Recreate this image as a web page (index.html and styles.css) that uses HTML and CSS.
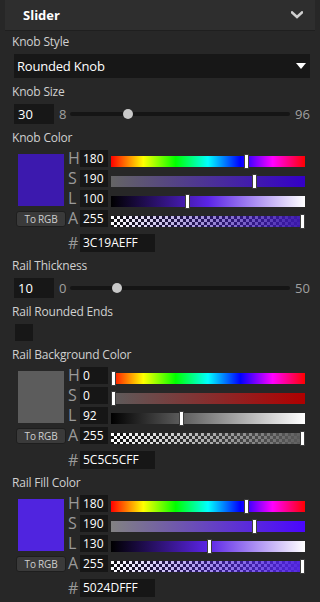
FILE: index.html
```html
<!DOCTYPE html>
<html lang="en">

<head>
    <meta charset="UTF-8">
    <meta name="viewport" content="width=device-width, initial-scale=1.0">
    <title>Slider Inspector</title>
    <link rel="stylesheet" href="styles.css">
</head>

<body>

    <div class="section-head">
        <span class="section-title">Slider</span>
        <svg class="chevron" width="12" height="8" viewBox="0 0 12 8">
            <path d="M1 1.5 L6 6 L11 1.5" fill="none" stroke="#cfcfcf" stroke-width="2.6" stroke-linecap="square"/>
        </svg>
    </div>

    <div class="props">

        <div class="field">
            <div class="label">Knob Style</div>
            <div class="dropdown">
                <span>Rounded Knob</span>
                <span class="caret"></span>
            </div>
        </div>

        <div class="field">
            <div class="label">Knob Size</div>
            <div class="slider">
                <div class="num">30</div>
                <span class="min">8</span>
                <div class="track"><span class="knob" style="left: 53px"></span></div>
                <span class="max">96</span>
            </div>
        </div>

        <!-- Knob color: H180 S190 L100 -> #3C19AE -->
        <div class="field">
            <div class="label">Knob Color</div>
            <div class="picker">
                <div class="picker-left">
                    <div class="swatch" style="background: #3c19ae"></div>
                    <button class="to-rgb">To RGB</button>
                </div>
                <div class="picker-rows">
                    <div class="row">
                        <span class="ch">H</span><div class="val">180</div>
                        <div class="bar hue"><span class="handle" style="left: 133px"></span></div>
                    </div>
                    <div class="row">
                        <span class="ch">S</span><div class="val">190</div>
                        <div class="bar" style="background: linear-gradient(to right, #646464, #3400c8)"><span class="handle" style="left: 141px"></span></div>
                    </div>
                    <div class="row">
                        <span class="ch">L</span><div class="val">100</div>
                        <div class="bar" style="background: linear-gradient(to right, #000, #5b24e6, #fff)"><span class="handle" style="left: 74px"></span></div>
                    </div>
                    <div class="row">
                        <span class="ch">A</span><div class="val">255</div>
                        <div class="bar checker"><div class="fade" style="background: linear-gradient(to right, rgba(60,25,174,0), #3c19ae)"></div><span class="handle" style="left: 189px"></span></div>
                    </div>
                </div>
            </div>
            <div class="hex-row">
                <span class="ch">#</span><div class="hex">3C19AEFF</div>
            </div>
        </div>

        <div class="field">
            <div class="label">Rail Thickness</div>
            <div class="slider">
                <div class="num">10</div>
                <span class="min">0</span>
                <div class="track"><span class="knob" style="left: 42px"></span></div>
                <span class="max">50</span>
            </div>
        </div>

        <div class="field">
            <div class="label">Rail Rounded Ends</div>
            <div class="checkbox"></div>
        </div>

        <!-- Rail background: H0 S0 L92 -> #5C5C5C -->
        <div class="field">
            <div class="label">Rail Background Color</div>
            <div class="picker">
                <div class="picker-left">
                    <div class="swatch" style="background: #5c5c5c"></div>
                    <button class="to-rgb">To RGB</button>
                </div>
                <div class="picker-rows">
                    <div class="row">
                        <span class="ch">H</span><div class="val">0</div>
                        <div class="bar hue"><span class="handle" style="left: 0px"></span></div>
                    </div>
                    <div class="row">
                        <span class="ch">S</span><div class="val">0</div>
                        <div class="bar" style="background: linear-gradient(to right, #5c5c5c, #b00000)"><span class="handle" style="left: 0px"></span></div>
                    </div>
                    <div class="row">
                        <span class="ch">L</span><div class="val">92</div>
                        <div class="bar" style="background: linear-gradient(to right, #000, #808080, #fff)"><span class="handle" style="left: 68px"></span></div>
                    </div>
                    <div class="row">
                        <span class="ch">A</span><div class="val">255</div>
                        <div class="bar checker"><div class="fade" style="background: linear-gradient(to right, rgba(92,92,92,0), #5c5c5c)"></div><span class="handle" style="left: 189px"></span></div>
                    </div>
                </div>
            </div>
            <div class="hex-row">
                <span class="ch">#</span><div class="hex">5C5C5CFF</div>
            </div>
        </div>

        <!-- Rail fill: H180 S190 L130 -> #5024DF -->
        <div class="field">
            <div class="label">Rail Fill Color</div>
            <div class="picker">
                <div class="picker-left">
                    <div class="swatch" style="background: #5024df"></div>
                    <button class="to-rgb">To RGB</button>
                </div>
                <div class="picker-rows">
                    <div class="row">
                        <span class="ch">H</span><div class="val">180</div>
                        <div class="bar hue"><span class="handle" style="left: 133px"></span></div>
                    </div>
                    <div class="row">
                        <span class="ch">S</span><div class="val">190</div>
                        <div class="bar" style="background: linear-gradient(to right, #828282, #4a06ff)"><span class="handle" style="left: 141px"></span></div>
                    </div>
                    <div class="row">
                        <span class="ch">L</span><div class="val">130</div>
                        <div class="bar" style="background: linear-gradient(to right, #000, #5b24e6, #fff)"><span class="handle" style="left: 96px"></span></div>
                    </div>
                    <div class="row">
                        <span class="ch">A</span><div class="val">255</div>
                        <div class="bar checker"><div class="fade" style="background: linear-gradient(to right, rgba(80,36,223,0), #5024df)"></div><span class="handle" style="left: 189px"></span></div>
                    </div>
                </div>
            </div>
            <div class="hex-row">
                <span class="ch">#</span><div class="hex">5024DFFF</div>
            </div>
        </div>

    </div>

</body>

</html>
```

FILE: styles.css
```css
body {
    margin: 0;
    background: #272727;
    color: #d4d4d4;
    font-family: "Open Sans", "Noto Sans", sans-serif;
    font-size: 12px;
}

/* Collapsible section header */
.section-head {
    display: flex;
    align-items: center;
    justify-content: space-between;
    height: 30px;
    margin: 0 5px;
    padding: 0 12px 0 18px;
    background: #2e2e2e;
    border-bottom: 1px solid #1f1f1f;
}

.section-title {
    font-weight: bold;
    font-size: 13px;
    color: #fff;
}

.chevron {
    display: block;
}

.props {
    padding: 3px 10px 0 12px;
}

.field {
    margin-bottom: 6px;
}

.label {
    height: 16px;
    line-height: 16px;
    margin-bottom: 4px;
    color: #d0d0d0;
    letter-spacing: -0.2px;
}

.dropdown {
    display: flex;
    align-items: center;
    justify-content: space-between;
    height: 24px;
    margin-left: 2px;
    padding: 0 4px 0 3px;
    background: #171717;
    color: #fff;
    font-size: 13px;
    letter-spacing: -0.2px;
}

.caret {
    width: 0;
    height: 0;
    border-left: 5px solid transparent;
    border-right: 5px solid transparent;
    border-top: 6px solid #fff;
}

/* Number + slider rows */
.slider {
    display: flex;
    align-items: center;
    margin-left: 2px;
}

.num {
    width: 36px;
    height: 20px;
    line-height: 20px;
    padding-left: 4px;
    background: #171717;
    color: #fff;
    font-size: 13px;
}

.min {
    width: 11px;
    margin-left: 5px;
    color: #a0a0a0;
    font-size: 13px;
}

.track {
    position: relative;
    width: 220px;
    height: 4px;
    border-radius: 2px;
    background: #151515;
}

.knob {
    position: absolute;
    top: -3px;
    width: 10px;
    height: 10px;
    border-radius: 50%;
    background: #c9c9c9;
}

.max {
    margin-left: 5px;
    color: #a0a0a0;
    font-size: 13px;
}

.checkbox {
    width: 18px;
    height: 17px;
    margin-left: 3px;
    background: #171717;
}

/* Color picker */
.picker {
    display: flex;
    margin-left: 4px;
}

.picker-left {
    display: flex;
    flex-direction: column;
    align-items: center;
    width: 50px;
    padding-top: 4px;
}

.swatch {
    width: 46px;
    height: 52px;
}

.to-rgb {
    width: 50px;
    height: 16px;
    margin-top: 5px;
    padding: 0;
    border: 1px solid #1e1e1e;
    border-radius: 3px;
    background: #3a3a3a;
    color: #cfcfcf;
    font-family: inherit;
    font-size: 10px;
    letter-spacing: -0.2px;
    line-height: 13px;
    white-space: nowrap;
}

.picker-rows {
    margin-left: 2px;
}

.row {
    display: flex;
    height: 17px;
    margin-bottom: 3px;
}

.ch {
    width: 12px;
    color: #9a9a9a;
    font-size: 16px;
    line-height: 17px;
}

.val {
    width: 25px;
    padding-left: 3px;
    background: #161616;
    color: #fff;
    line-height: 17px;
}

.bar {
    position: relative;
    width: 194px;
    height: 11px;
    margin: 6px 0 0 3px;
}

.hue {
    background: linear-gradient(to right, #f00, #ff0, #0f0, #0ff, #00f, #f0f, #f00);
}

.checker {
    background-color: #fff;
    background-image:
        linear-gradient(45deg, #111 25%, transparent 25%, transparent 75%, #111 75%),
        linear-gradient(45deg, #111 25%, transparent 25%, transparent 75%, #111 75%);
    background-size: 6px 6px;
    background-position: 0 0, 3px 3px;
}

.fade {
    height: 100%;
}

.handle {
    position: absolute;
    top: -2px;
    width: 3px;
    height: 13px;
    border: 1px solid #3c3c3c;
    background: #fff;
}

.hex-row {
    display: flex;
    margin: 4px 0 0 56px;
}

.hex-row .ch {
    line-height: 18px;
}

.hex {
    width: 72px;
    height: 18px;
    line-height: 18px;
    padding-left: 3px;
    background: #161616;
    color: #fff;
}
```
